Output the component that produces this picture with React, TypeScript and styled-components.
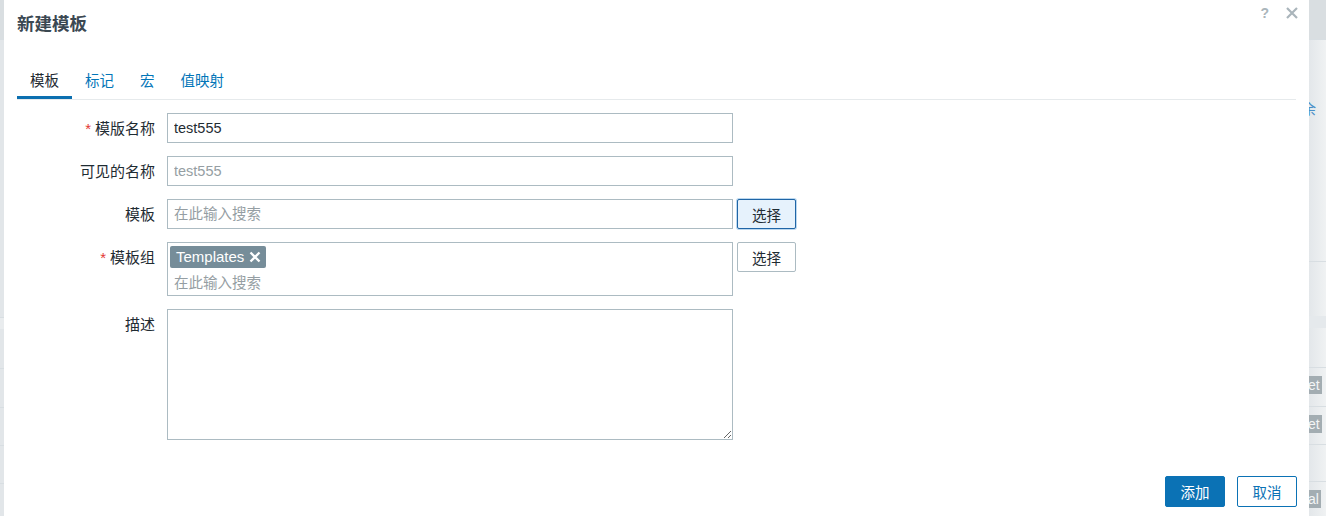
import React from "react";
import styled, { createGlobalStyle } from "styled-components";

const Global = createGlobalStyle`
  html, body { margin: 0; padding: 0; }
  body {
    width: 1326px; height: 516px; overflow: hidden;
    font-family: "Liberation Sans", Arial, "Noto Sans CJK SC", sans-serif;
    font-size: 14.5px; color: #1f2c33; background: #dfe4e7;
  }
  * { box-sizing: border-box; }
`;

const Page = styled.div`
  position: relative;
  width: 1326px;
  height: 516px;
  display: flex;
  justify-content: space-between;
  background: #e4e8eb;
`;

const LeftStrip = styled.div`
  width: 4px;
  display: flex;
  flex-direction: column;
  background: #e2e6e9;
`;

const RightStrip = styled.div`
  width: 17px;
  display: flex;
  flex-direction: column;
  background: linear-gradient(to right, #e3e7ea, #f0f2f3);
`;

const StripRow = styled.div<{ $h: number; $bg?: string; $line?: boolean }>`
  height: ${(p) => p.$h}px;
  flex: none;
  background: ${(p) => p.$bg || "transparent"};
  border-bottom: ${(p) => (p.$line ? "1px solid #d8dee2" : "none")};
  display: flex;
  align-items: flex-start;
  overflow: hidden;
  font-size: 14px;
  white-space: nowrap;
`;

const StripBadge = styled.span`
  background: #a3adb2;
  color: #f3f5f6;
  padding: 0 2px;
  margin-top: 8px;
  line-height: 18px;
  margin-left: -3px;
`;

const StripLink = styled.span`
  color: #4a90c8;
  font-size: 14px;
  margin-left: -7px;
  margin-top: 58px;
  font-family: "Noto Sans CJK SC", sans-serif;
`;

const Dialog = styled.div`
  position: absolute;
  left: 4px;
  top: 0;
  width: 1305px;
  height: 540px;
  background: #ffffff;
  display: flex;
  flex-direction: column;
`;

const Header = styled.div`
  display: flex;
  justify-content: space-between;
  align-items: flex-start;
  padding: 11px 10px 0 13px;
  height: 42px;
`;

const Title = styled.h4`
  margin: 0;
  font-size: 17.5px;
  line-height: 24px;
  font-weight: bold;
  color: #3b4852;
  font-family: "Noto Sans CJK SC", sans-serif;
`;

const HeaderIcons = styled.div`
  display: flex;
  align-items: center;
  gap: 16px;
  margin-top: -8px;
`;

const HelpIcon = styled.span`
  color: #aab5bb;
  font-size: 14px;
  font-weight: bold;
  line-height: 20px;
`;

const CloseIcon = styled.svg`
  width: 14px;
  height: 14px;
  display: block;
`;

const Body = styled.div`
  padding: 0 13px;
  flex: 1;
  display: flex;
  flex-direction: column;
`;

const TabList = styled.div`
  margin-top: 28px;
  display: flex;
  border-bottom: 1px solid #e6eaec;
`;

const Tab = styled.div<{ $active?: boolean }>`
  padding: 0 13px 6px;
  line-height: 20px;
  font-size: 14.5px;
  font-family: "Noto Sans CJK SC", sans-serif;
  color: ${(p) => (p.$active ? "#1f2c33" : "#0275b8")};
  border-bottom: 3px solid ${(p) => (p.$active ? "#0b6fb0" : "transparent")};
`;

const Form = styled.div`
  margin-top: 13px;
  display: grid;
  grid-template-columns: 138px 566px 60px;
  column-gap: 12px;
  row-gap: 13px;
  align-items: start;
`;

const Label = styled.div<{ $required?: boolean }>`
  text-align: right;
  padding-top: 5px;
  line-height: 20px;
  font-family: "Noto Sans CJK SC", sans-serif;
  font-size: 15px;
  color: #1f2c33;
  &::before {
    content: ${(p) => (p.$required ? '"*"' : "none")};
    color: #e33734;
    margin-right: 4px;
    font-family: "Liberation Sans", sans-serif;
  }
`;

const Input = styled.input`
  width: 566px;
  height: 30px;
  border: 1px solid #acbbc2;
  border-radius: 0;
  padding: 0 6px;
  font-family: "Liberation Sans", "Noto Sans CJK SC", sans-serif;
  font-size: 14.5px;
  color: #1f2c33;
  outline: none;
  background: #fff;
  &::placeholder { color: #959ea3; }
`;

const SelectButton = styled.button<{ $focused?: boolean }>`
  width: 59px;
  height: 30px;
  margin-left: -8px;
  border-radius: 2px;
  border: 1px solid ${(p) => (p.$focused ? "#1f65a6" : "#acbbc2")};
  background: ${(p) => (p.$focused ? "#e6f2fc" : "#ffffff")};
  box-shadow: ${(p) => (p.$focused ? "0 0 0 1px #bcd8ef" : "none")};
  font-family: "Noto Sans CJK SC", sans-serif;
  font-size: 14.5px;
  color: #1f2c33;
  padding: 0;
`;

const Empty = styled.div``;

const MultiSelect = styled.div`
  width: 566px;
  height: 54px;
  border: 1px solid #acbbc2;
  padding: 3px 2px 0;
  display: flex;
  flex-direction: column;
  align-items: flex-start;
`;

const Tag = styled.span`
  display: inline-flex;
  align-items: center;
  gap: 5px;
  height: 22px;
  padding: 0 5px 0 6px;
  background: #768d99;
  color: #ffffff;
  border-radius: 2px;
  font-size: 15px;
  line-height: 22px;
`;

const TagX = styled.svg`
  width: 12px;
  height: 12px;
  display: block;
`;

const MultiInput = styled.input`
  border: none;
  outline: none;
  padding: 0 4px;
  margin-top: 2px;
  height: 22px;
  width: 300px;
  font-family: "Noto Sans CJK SC", sans-serif;
  font-size: 14.5px;
  &::placeholder { color: #959ea3; }
`;

const TextArea = styled.textarea`
  width: 566px;
  height: 131px;
  border: 1px solid #acbbc2;
  border-radius: 0;
  outline: none;
  padding: 5px 6px;
  font-size: 14px;
  display: block;
`;

const Footer = styled.div`
  display: flex;
  justify-content: flex-end;
  gap: 12px;
  padding: 36px 0 0 0;
  margin-right: -1px;
`;

const FooterButton = styled.button<{ $primary?: boolean }>`
  width: 60px;
  height: 31px;
  border-radius: 2px;
  border: 1px solid #0b72b5;
  background: ${(p) => (p.$primary ? "#0b72b5" : "#ffffff")};
  color: ${(p) => (p.$primary ? "#ffffff" : "#0b72b5")};
  font-family: "Noto Sans CJK SC", sans-serif;
  font-size: 14.5px;
  padding: 0;
`;

export default function App() {
  return (
    <>
      <Global />
      <Page>
        <LeftStrip>
          <StripRow $h={40} $bg="#d9dee1" $line />
          <StripRow $h={278} $line />
          <StripRow $h={11} $bg="#e9ecee" />
          <StripRow $h={40} $line />
          <StripRow $h={39} $line />
          <StripRow $h={38} $line />
          <StripRow $h={38} $line />
        </LeftStrip>
        <RightStrip>
          <StripRow $h={40} $bg="#d9dee1" $line />
          <StripRow $h={222} $line>
            <StripLink>余</StripLink>
          </StripRow>
          <StripRow $h={54} />
          <StripRow $h={12} $bg="#e5e9ec" />
          <StripRow $h={40} $line />
          <StripRow $h={39} $line>
            <StripBadge>et</StripBadge>
          </StripRow>
          <StripRow $h={38} $line>
            <StripBadge>et</StripBadge>
          </StripRow>
          <StripRow $h={37} $line />
          <StripRow $h={33}>
            <StripBadge>al</StripBadge>
          </StripRow>
        </RightStrip>

        <Dialog>
          <Header>
            <Title>新建模板</Title>
            <HeaderIcons>
              <HelpIcon>?</HelpIcon>
              <CloseIcon viewBox="0 0 14 14">
                <path d="M2 2 L12 12 M12 2 L2 12" stroke="#aab5bb" strokeWidth="2.2" />
              </CloseIcon>
            </HeaderIcons>
          </Header>
          <Body>
            <TabList>
              <Tab $active>模板</Tab>
              <Tab>标记</Tab>
              <Tab>宏</Tab>
              <Tab>值映射</Tab>
            </TabList>
            <Form>
              <Label $required>模版名称</Label>
              <Input defaultValue="test555" />
              <Empty />

              <Label>可见的名称</Label>
              <Input placeholder="test555" />
              <Empty />

              <Label>模板</Label>
              <Input placeholder="在此输入搜索" />
              <SelectButton $focused>选择</SelectButton>

              <Label $required>模板组</Label>
              <MultiSelect>
                <Tag>
                  Templates
                  <TagX viewBox="0 0 12 12">
                    <path d="M1.5 1.5 L10.5 10.5 M10.5 1.5 L1.5 10.5" stroke="#ffffff" strokeWidth="2.3" />
                  </TagX>
                </Tag>
                <MultiInput placeholder="在此输入搜索" />
              </MultiSelect>
              <SelectButton>选择</SelectButton>

              <Label>描述</Label>
              <TextArea />
              <Empty />
            </Form>
            <Footer>
              <FooterButton $primary>添加</FooterButton>
              <FooterButton>取消</FooterButton>
            </Footer>
          </Body>
        </Dialog>
      </Page>
    </>
  );
}
